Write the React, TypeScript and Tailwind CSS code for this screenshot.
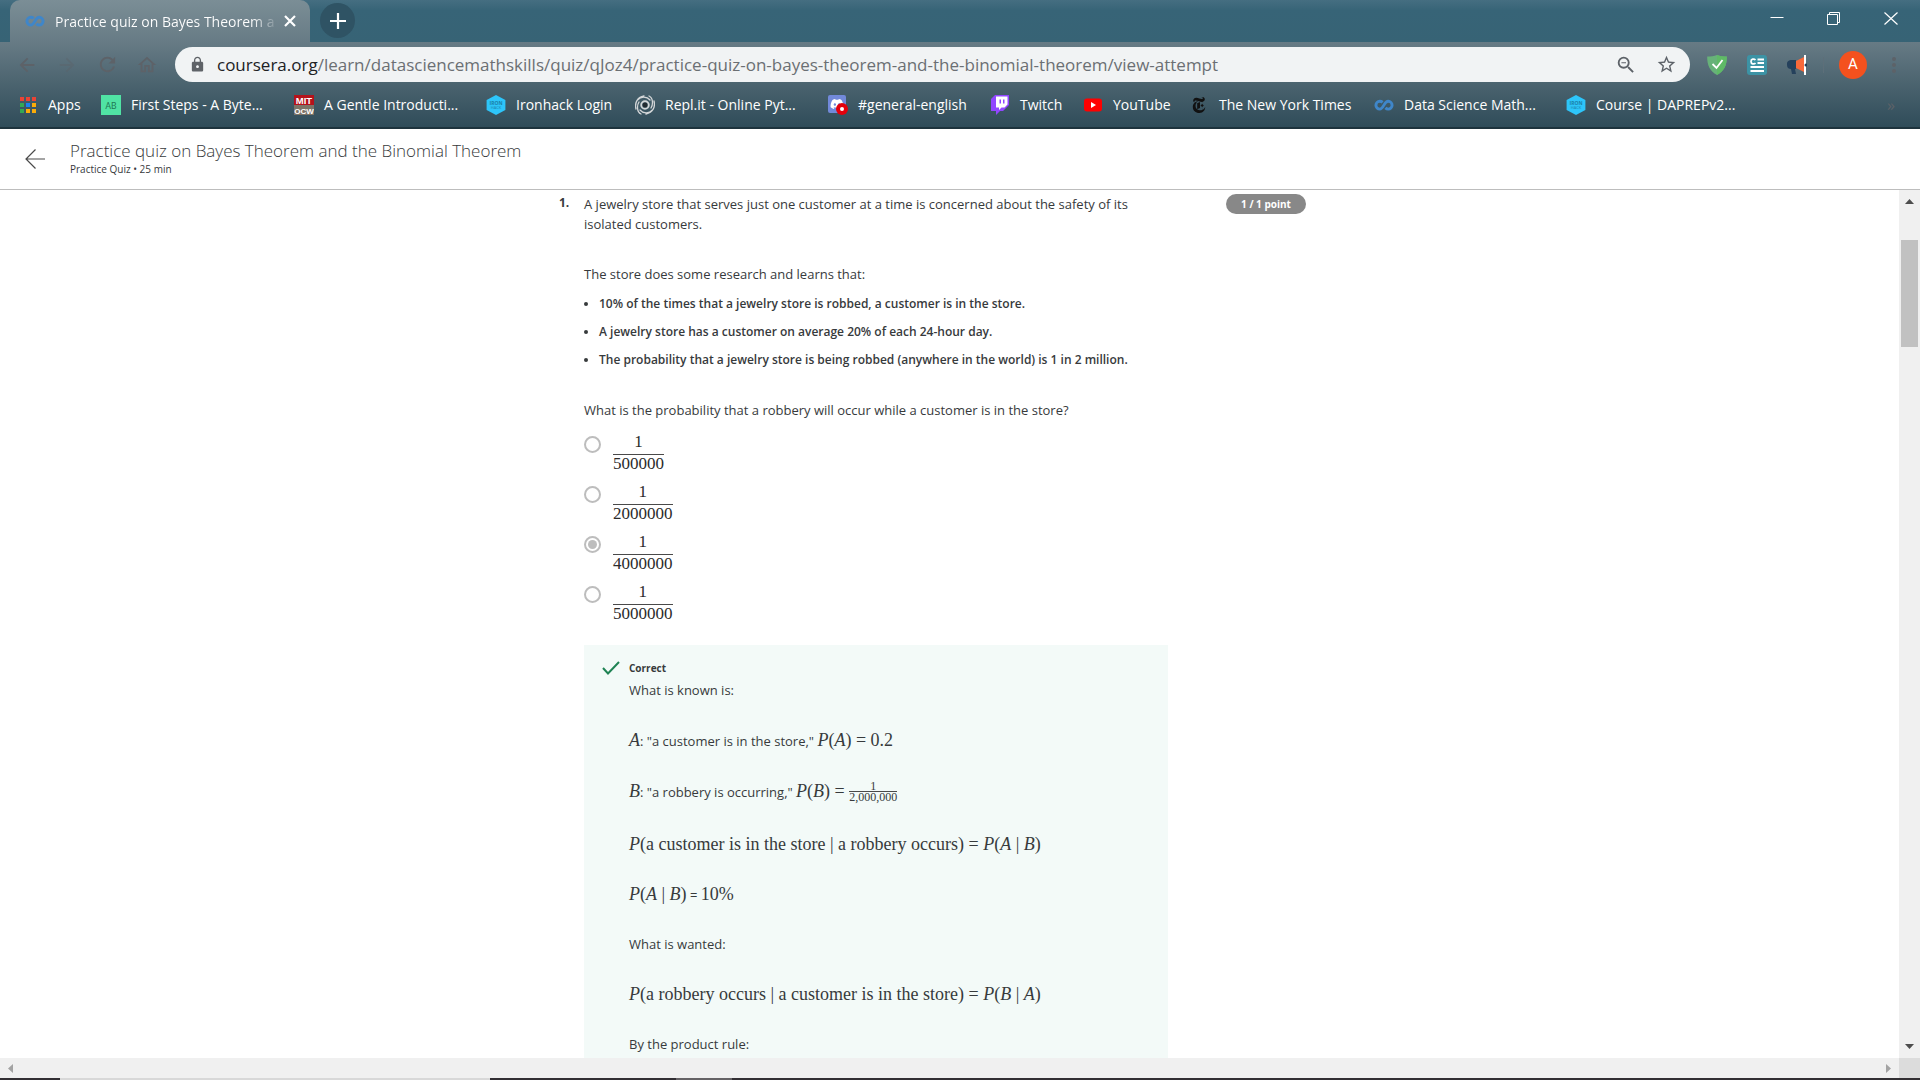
import type { ReactNode } from "react";
import {
  MdArrowBack,
  MdArrowForward,
  MdLock,
  MdOutlineHome,
  MdOutlineZoomOut,
  MdRefresh,
  MdStarBorder,
} from "react-icons/md";
import { FaDiscord } from "react-icons/fa";
import { SiNewyorktimes } from "react-icons/si";

function CourseraMark() {
  return (
    <svg width="20" height="20" viewBox="0 0 20 20" fill="none" stroke="#3f86c9" strokeWidth="2.9">
      <path d="M8.600 7.300C7.800 6.600 6.800 6.300 5.800 6.300a3.900 3.900 0 0 0 0 7.800c3.800 0 4.200-7.800 8.400-7.800a3.900 3.900 0 0 1 0 7.800c-1.200 0-2.100-.5-2.800-1.200" />
    </svg>
  );
}

function IronhackMark() {
  return (
    <svg width="20" height="20" viewBox="0 0 20 20">
      <path d="M10 0l9.400 5v10L10 20 .6 15V5z" fill="#2dc5fa" />
      <text x="10" y="9.500" fontSize="5" fontWeight="700" textAnchor="middle" fill="#1b7fa6" fontFamily="Open Sans">IRON</text>
      <text x="10" y="14" fontSize="4" textAnchor="middle" fill="#1b7fa6" fontFamily="Open Sans">HACK</text>
    </svg>
  );
}

function AppsGrid() {
  const dots = ["#ea4335", "#ea4335", "#ea4335", "#34a853", "#1a82f0", "#fbac08", "#34a853", "#fbac08", "#fbac08"];
  return (
    <svg width="18" height="18" viewBox="0 0 18 18">
      {dots.map((c, i) => (
        <rect key={i} x={(i % 3) * 6} y={Math.floor(i / 3) * 6 + 1} width="4" height="4" fill={c} />
      ))}
    </svg>
  );
}

function AbMark() {
  return (
    <svg width="20" height="20" viewBox="0 0 20 20">
      <rect width="20" height="20" fill="#50e3a4" />
      <text x="10" y="13.500" fontSize="9" textAnchor="middle" fill="#217a54" fontFamily="Roboto">AB</text>
    </svg>
  );
}

function MitMark() {
  return (
    <svg width="20" height="20" viewBox="0 0 20 20" fontFamily="Liberation Sans" fontWeight="700">
      <rect width="20" height="10" fill="#b5121b" />
      <rect y="10" width="20" height="10" fill="#7d7468" />
      <text x="10" y="8.600" fontSize="9.500" textAnchor="middle" fill="#fff">MIT</text>
      <text x="10" y="18.600" fontSize="8" textAnchor="middle" fill="#fff">OCW</text>
    </svg>
  );
}

function ReplMark() {
  return (
    <svg width="20" height="20" viewBox="0 0 20 20" fill="none" stroke="#d3d6d8" strokeWidth="1.300" strokeLinecap="round">
      <circle cx="10" cy="10" r="3.800" strokeWidth="1.900" />
      <circle cx="10" cy="10" r="2.400" fill="#222a30" stroke="none" />
      <path d="M1 14C-.5 8 2 2.500 9 1M19 6c1.500 6-1 11.500-8 13M6 19C1.500 17 2 10 4 7M14 1c4.500 2 4 9 2 12M2.500 5C6 1 12 1.500 15 5M17.500 15c-3.500 4-9.500 3.500-12.500 0" />
    </svg>
  );
}

function DiscordMark() {
  return (
    <span className="relative block size-5">
      <span className="flex size-[18px] items-center justify-center rounded-[2px] bg-[#7289da] text-white">
        <FaDiscord size={14} />
      </span>
      <span className="absolute right-0 bottom-0 flex size-3 items-center justify-center rounded-full bg-[#e3000b]">
        <span className="size-1 rounded-full bg-white" />
      </span>
    </span>
  );
}

function TwitchMark() {
  return (
    <svg width="20" height="20" viewBox="0 0 20 20">
      <path d="M5 0L1 4v12h5v4l4-4h3l6-6V0z" fill="#9146ff" />
      <path d="M6 1.500h11.500V9.500l-3 3h-3L9 15v-2.500H6z" fill="#fff" />
      <path d="M9.500 4.500h1.500v4H9.500zM13 4.500h1.500v4H13z" fill="#9146ff" />
    </svg>
  );
}

function YouTubeMark() {
  return (
    <svg width="20" height="20" viewBox="0 0 20 20">
      <rect x="1" y="3.500" width="18" height="13" rx="3" fill="#f00" />
      <path d="M8 7l5 3-5 3z" fill="#fff" />
    </svg>
  );
}

const bookmarks: { label: string; icon: ReactNode; width: string }[] = [
  { label: "Apps", icon: <AppsGrid />, width: "w-[81px]" },
  { label: "First Steps - A Byte...", icon: <AbMark />, width: "w-[193px]" },
  { label: "A Gentle Introducti...", icon: <MitMark />, width: "w-[192px]" },
  { label: "Ironhack Login", icon: <IronhackMark />, width: "w-[149px]" },
  { label: "Repl.it - Online Pyt...", icon: <ReplMark />, width: "w-[193px]" },
  { label: "#general-english", icon: <DiscordMark />, width: "w-[162px]" },
  { label: "Twitch", icon: <TwitchMark />, width: "w-[93px]" },
  { label: "YouTube", icon: <YouTubeMark />, width: "w-[106px]" },
  {
    label: "The New York Times",
    icon: (
      <span className="flex w-5 justify-center text-[#111]">
        <SiNewyorktimes size={16} />
      </span>
    ),
    width: "w-[185px]",
  },
  { label: "Data Science Math...", icon: <CourseraMark />, width: "w-[192px]" },
  { label: "Course | DAPREPv2...", icon: <IronhackMark />, width: "w-[180px]" },
];

function TabStrip() {
  return (
    <div className="flex h-[42px] bg-linear-to-b from-[#456e81] via-[#376477] via-25% to-[#376375] pl-[10px]">
      <div className="flex w-[300px] items-center rounded-t-[10px] bg-linear-to-b from-[#7b8e96] to-[#677b85] pr-[11px] pl-[15px] text-white">
        <CourseraMark />
        <span className="ml-[10px] bg-linear-to-r from-white from-90% to-white/20 bg-clip-text text-[14px] whitespace-nowrap text-transparent">
          Practice quiz on Bayes Theorem a
        </span>
        <button aria-label="Close tab" className="ml-auto p-[3px]">
          <svg width="12" height="12" viewBox="0 0 12 12" stroke="#fff" strokeWidth="2.200">
            <path d="M1 1l10 10M11 1L1 11" />
          </svg>
        </button>
      </div>
      <button aria-label="New tab" className="mt-[3px] ml-[10px] flex size-[35px] items-center justify-center rounded-full bg-[#2f5364]">
        <svg width="16" height="16" viewBox="0 0 16 16" stroke="#fff" strokeWidth="2.200">
          <path d="M8 0v16M0 8h16" />
        </svg>
      </button>
      <div className="mt-3 mr-[22px] ml-auto flex h-[13px] gap-[43px] text-white">
        <button aria-label="Minimize">
          <svg width="14" height="13" viewBox="0 0 14 13" stroke="currentColor">
            <path d="M.5 5.500h13" />
          </svg>
        </button>
        <button aria-label="Restore">
          <svg width="14" height="13" viewBox="0 0 14 13" fill="none" stroke="currentColor">
            <path d="M.5 2.500h10v10H.5zM2.500 2.500v-2h10v10h-2" />
          </svg>
        </button>
        <button aria-label="Close">
          <svg width="14" height="13" viewBox="0 0 14 13" stroke="currentColor" strokeWidth="1.200">
            <path d="M.5.5l13 12M13.500.5l-13 12" />
          </svg>
        </button>
      </div>
    </div>
  );
}

function AddressRow() {
  return (
    <div className="flex h-[45px] items-center pr-5 pl-4 text-[#5d6268]">
      <button aria-label="Back" className="mr-[18px]"><MdArrowBack size={22} /></button>
      <button aria-label="Forward" className="mr-[18px] opacity-40"><MdArrowForward size={22} /></button>
      <button aria-label="Reload" className="mr-[17px]"><MdRefresh size={23} /></button>
      <button aria-label="Home" className="mr-[17px]"><MdOutlineHome size={22} /></button>
      <div className="flex h-[35px] flex-1 items-center rounded-full bg-[#f1f3f4] pr-[13px] pl-[14px]">
        <MdLock size={17} className="mr-[11px] text-[#5f6368]" />
        <label htmlFor="address" className="text-[17px] text-[#202124]">coursera.org</label>
        <input
          id="address"
          className="min-w-0 flex-1 bg-transparent text-[17px] text-[#6b6f73] outline-none"
          defaultValue="/learn/datasciencemathskills/quiz/qJoz4/practice-quiz-on-bayes-theorem-and-the-binomial-theorem/view-attempt"
        />
        <button aria-label="Zoom"><MdOutlineZoomOut size={22} /></button>
        <button aria-label="Bookmark this tab" className="ml-[19px]"><MdStarBorder size={21} /></button>
      </div>
      <button aria-label="Protection" className="ml-[17px]">
        <svg width="20" height="20" viewBox="0 0 20 20">
          <path d="M10 0c3 1 6.500 1.500 9.800 1.500C20 10 17 16.500 10 20 3 16.500 0 10 .2 1.500 3.500 1.500 7 1 10 0z" fill="#67b279" />
          <path d="M10 0c3 1 6.500 1.500 9.800 1.500C20 10 17 16.500 10 20z" fill="#5fba66" />
          <path d="M5.500 9l4 4 6-8" fill="none" stroke="#fff" strokeWidth="1.800" />
        </svg>
      </button>
      <button aria-label="Reader" className="ml-5">
        <svg width="20" height="20" viewBox="0 0 20 20">
          <rect width="20" height="20" rx="3" fill="#3c93a5" />
          <path d="M10.500 4.500H17M10.500 8H17M3.500 12H17M3.500 16H17" stroke="#fff" strokeWidth="2" />
          <path d="M8.500 5C7 3.300 4 4 4 6.500S7 9.700 8.500 8" fill="none" stroke="#fff" strokeWidth="1.700" />
        </svg>
      </button>
      <button aria-label="Announcements" className="ml-5">
        <svg width="20" height="20" viewBox="0 0 20 20">
          <path d="M9 5H4a4 4 0 0 0-4 5c0 3 2 4 4 4l1 5h4l-1-5h1z" fill="#25415c" />
          <path d="M9 6l8-4v15l-8-4z" fill="#f9693a" />
          <path d="M18 0v20" stroke="#fff" strokeWidth="2" />
          <circle cx="19" cy="10" r="1.500" fill="#25415c" />
        </svg>
      </button>
      <div className="ml-4 h-4 w-px bg-[#5d6f79]" />
      <button aria-label="Profile" className="ml-[15px] flex size-7 items-center justify-center rounded-full bg-[#f4511e] font-[Roboto] text-[15px] text-white">A</button>
      <button aria-label="Menu" className="ml-[21px]">
        <svg width="12" height="18" viewBox="0 0 12 18" fill="#5d6268">
          <circle cx="6" cy="3" r="2" />
          <circle cx="6" cy="9" r="2" />
          <circle cx="6" cy="15" r="2" />
        </svg>
      </button>
    </div>
  );
}

function BookmarksBar() {
  return (
    <nav className="flex h-[40px] items-center pr-[25px] pb-[5px] pl-5 text-[14px] text-white">
      {bookmarks.map((b) => (
        <a key={b.label} href="#" className={"flex shrink-0 items-center gap-[10px] whitespace-nowrap " + b.width}>
          {b.icon}
          <span>{b.label}</span>
        </a>
      ))}
      <button aria-label="More bookmarks" className="ml-auto text-[16px] text-[#5d6268]">»</button>
    </nav>
  );
}

function QuizHeader() {
  return (
    <header className="flex h-[61px] items-start border-b border-[#bdbdbd] bg-white pl-[25px]">
      <button aria-label="Back to course" className="mt-5">
        <svg width="20" height="20" viewBox="0 0 20 20" fill="none" stroke="#4a4a4a" strokeWidth="1.200">
          <path d="M10.500.5L1 10l9.500 9.500M1 10h19" />
        </svg>
      </button>
      <div className="ml-[25px] pt-3 text-[#373a3c]">
        <h1 className="text-[17px] leading-[20px] font-light">Practice quiz on Bayes Theorem and the Binomial Theorem</h1>
        <p className="text-[10px] leading-[16px]">Practice Quiz • 25 min</p>
      </div>
    </header>
  );
}

function M({ children }: { children: ReactNode }) {
  return <span className="font-['Liberation_Serif',serif] text-[18px]">{children}</span>;
}

function V({ children }: { children: string }) {
  return <i>{children}</i>;
}

const options = ["500000", "2000000", "4000000", "5000000"];

function Options() {
  return (
    <fieldset className="mt-[10px]" aria-label="Answer">
      {options.map((d, i) => (
        <div key={d} className="flex h-[50px] items-start">
          <input
            type="radio"
            name="answer"
            id={"option-" + d}
            defaultChecked={i === 2}
            className="mt-[6px] size-[17px] appearance-none rounded-full border-2 border-[#bdbdbd] bg-white p-[2px] checked:bg-[#bdbdbd] checked:bg-clip-content"
          />
          <label
            htmlFor={"option-" + d}
            className="mt-1 ml-[11px] flex flex-col px-px text-center font-['Liberation_Serif',serif] text-[17px] leading-[20px] text-[#2b2b2b]"
          >
            <span className="h-[21px] border-b border-[#4a4a4a] leading-[16px]">1</span>
            <span className="leading-[18px]">{d}</span>
          </label>
        </div>
      ))}
    </fieldset>
  );
}

function Feedback() {
  return (
    <section className="mt-[15px] flex h-[600px] bg-[#f3faf8] pt-[13px] pl-[18px]">
      <svg width="18" height="14" viewBox="0 0 18 14" fill="none" stroke="#1f8354" strokeWidth="2" className="mt-[3px]">
        <path d="M1 7l5 5.500L17 1" />
      </svg>
      <div className="ml-[9px] text-[13px] leading-[20px]">
        <h2 className="text-[10px] leading-[20px] font-bold">Correct</h2>
        <p className="mt-[2px]">What is known is:</p>
        <p className="mt-[30px] h-5">
          <M><V>A</V></M>: "a customer is in the store," <M><V>P</V>(<V>A</V>) = 0.2</M>
        </p>
        <p className="mt-[30px] flex h-[22px] items-center whitespace-pre">
          <span><M><V>B</V></M>: "a robbery is occurring," <M><V>P</V>(<V>B</V>) = </M></span>
          <span className="flex flex-col text-center font-['Liberation_Serif',serif] text-[12px] leading-[10px]">
            <span className="border-b border-[#4a4a4a]">1</span>
            <span>2,000,000</span>
          </span>
        </p>
        <p className="mt-[30px] h-[22px] leading-[24px]">
          <M><V>P</V>(a customer is in the store | a robbery occurs) = <V>P</V>(<V>A</V> | <V>B</V>)</M>
        </p>
        <p className="mt-[30px] h-5">
          <M><V>P</V>(<V>A</V> | <V>B</V>)</M> = <M>10%</M>
        </p>
        <p className="mt-[30px]">What is wanted:</p>
        <p className="mt-[30px] h-5">
          <M><V>P</V>(a robbery occurs | a customer is in the store) = <V>P</V>(<V>B</V> | <V>A</V>)</M>
        </p>
        <p className="mt-[30px]">By the product rule:</p>
      </div>
    </section>
  );
}

function Question() {
  return (
    <article className="mx-auto flex w-full max-w-[781px] items-start text-[#373a3c]">
      <span className="mt-[3px] w-[25px] shrink-0 text-[12px] leading-[20px] font-bold">1.</span>
      <div className="w-[584px] text-[13px] leading-[20px]">
        <p className="mt-1">
          A jewelry store that serves just one customer at a time is concerned about the safety of its isolated customers.
        </p>
        <p className="mt-[30px]">The store does some research and learns that:</p>
        <ul className="mt-[10px] flex list-disc flex-col gap-2 pl-[15px] text-[12px] leading-[20px] font-semibold">
          <li>10% of the times that a jewelry store is robbed, a customer is in the store.</li>
          <li>A jewelry store has a customer on average 20% of each 24-hour day.</li>
          <li>The probability that a jewelry store is being robbed (anywhere in the world) is 1 in 2 million.</li>
        </ul>
        <p className="mt-[30px]">What is the probability that a robbery will occur while a customer is in the store?</p>
        <Options />
        <Feedback />
      </div>
      <span className="mt-1 ml-[58px] h-5 w-20 shrink-0 rounded-full bg-[#888] text-center text-[10px] leading-[20px] font-bold text-white">
        1 / 1 point
      </span>
    </article>
  );
}

function VerticalScrollbar() {
  return (
    <div className="flex w-[21px] flex-col items-center bg-[#f0f0f0] pt-[9px] pb-[9px]">
      <svg width="9" height="5" viewBox="0 0 9 5" fill="#4d4d4d"><path d="M4.500 0L9 5H0z" /></svg>
      <div className="mt-9 h-[107px] w-[17px] bg-[#c1c1c1]" />
      <svg width="9" height="5" viewBox="0 0 9 5" fill="#4d4d4d" className="mt-auto"><path d="M0 0h9L4.500 5z" /></svg>
    </div>
  );
}

function HorizontalScrollbar() {
  return (
    <div className="flex h-5 bg-[#f0f0f0]">
      <div className="flex flex-1 items-center justify-between px-2">
        <svg width="5" height="9" viewBox="0 0 5 9" fill="#a3a3a3"><path d="M5 0v9L0 4.500z" /></svg>
        <svg width="5" height="9" viewBox="0 0 5 9" fill="#a3a3a3"><path d="M0 0v9l5-4.500z" /></svg>
      </div>
      <div className="w-[21px] bg-[#dcdcdc]" />
    </div>
  );
}

export default function App() {
  return (
    <div className="flex h-screen flex-col overflow-hidden bg-white font-['Open_Sans',sans-serif]">
      <TabStrip />
      <div className="border-b-2 border-[#1d333d] bg-linear-to-b from-[#677b85] to-[#2f4c59]">
        <AddressRow />
        <BookmarksBar />
      </div>
      <QuizHeader />
      <div className="flex min-h-0 flex-1">
        <main className="min-w-0 flex-1 overflow-hidden">
          <Question />
        </main>
        <VerticalScrollbar />
      </div>
      <HorizontalScrollbar />
      <div className="flex h-[2px] bg-[#322f33]">
        <div className="ml-[60px] w-[430px] bg-[#d8d8d8]" />
        <div className="ml-[186px] w-[56px] bg-[#656265]" />
      </div>
    </div>
  );
}
